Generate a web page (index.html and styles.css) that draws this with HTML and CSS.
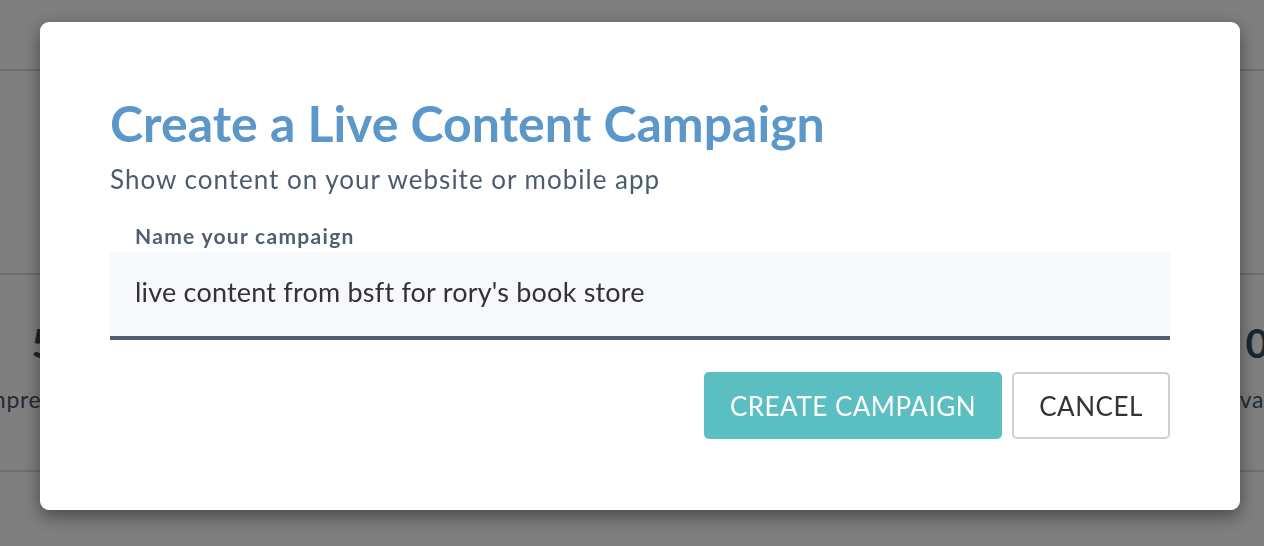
FILE: index.html
```html
<!DOCTYPE html>
<html>
<head>
<meta charset="utf-8">
<link rel="stylesheet" href="styles.css">
</head>
<body>
<div class="page">
  <header class="topbar"></header>
  <div class="spacer"></div>
  <section class="stats">
    <div class="stat stat-left">
      <div class="stat-num">5</div>
      <div class="stat-label">Impressions</div>
    </div>
    <div class="stat stat-mid">
      <div class="stat-num">1</div>
      <div class="stat-label">Clicks</div>
    </div>
    <div class="stat stat-right">
      <div class="stat-num">0</div>
      <div class="stat-label">Activations</div>
    </div>
  </section>
</div>

<div class="overlay">
  <div class="modal">
    <h1 class="modal-title">Create a Live Content Campaign</h1>
    <p class="modal-sub">Show content on your website or mobile app</p>
    <label class="field-label" for="cname">Name your campaign</label>
    <div class="field">
      <input id="cname" class="field-input" type="text" value="live content from bsft for rory's book store">
    </div>
    <div class="actions">
      <button class="btn btn-primary">CREATE CAMPAIGN</button>
      <button class="btn btn-secondary">CANCEL</button>
    </div>
  </div>
</div>
</body>
</html>
```

FILE: styles.css
```css
* { box-sizing: border-box; }
html, body { margin: 0; padding: 0; }
body {
  width: 1264px;
  height: 546px;
  overflow: hidden;
  background: #ffffff;
  font-family: Lato, "Open Sans", Arial, sans-serif;
}
.page { width: 1264px; }
.topbar { height: 71px; border-bottom: 2px solid #dcdcdc; }
.spacer { height: 202px; }
.stats {
  height: 199px;
  border-top: 2px solid #dcdcdc;
  border-bottom: 2px solid #dcdcdc;
  display: flex;
  justify-content: space-between;
  padding-top: 44px;
}
.stat {
  display: flex;
  flex-direction: column;
  align-items: center;
  color: #3a4a5c;
  white-space: nowrap;
}
.stat-left { width: 86px; }
.stat-mid { width: 120px; }
.stat-right { width: 14px; }
.stat-num { font-size: 40px; font-weight: 700; line-height: 48px; }
.stat-label {
  font-size: 23px;
  line-height: 30px;
  margin-top: 17px;
  letter-spacing: 0.6px;
  color: #46566a;
}

.overlay {
  position: fixed;
  inset: 0;
  background: rgba(0,0,0,0.5);
}
.modal {
  margin: 22px 0 0 40px;
  width: 1200px;
  height: 488px;
  background: #fff;
  border-radius: 9px;
  box-shadow: 0 6px 18px rgba(0,0,0,0.45);
  padding: 71px 70px 0 70px;
}
.modal-title {
  margin: 0;
  font-size: 50px;
  line-height: 60px;
  font-weight: 700;
  color: #5b97c9;
}
.modal-sub {
  margin: 10px 0 0 0;
  font-size: 26px;
  line-height: 32px;
  letter-spacing: 1px;
  color: #4c5b6e;
}
.field-label {
  display: block;
  margin: 28px 0 0 25px;
  font-size: 21px;
  line-height: 26px;
  font-weight: 700;
  letter-spacing: 1.3px;
  color: #4f5e72;
}
.field {
  margin-top: 3px;
  height: 88px;
  background: #f6f8fc;
  border-bottom: 4px solid #4f5e6f;
}
.field-input {
  display: block;
  width: 100%;
  height: 84px;
  border: 0;
  background: transparent;
  padding: 0 25px 5px 25px;
  font-family: Lato, "Open Sans", Arial, sans-serif;
  font-size: 27px;
  letter-spacing: 0.2px;
  color: #333;
  outline: none;
}
.actions {
  display: flex;
  justify-content: flex-end;
  gap: 10px;
  margin-top: 32px;
}
.btn {
  height: 67px;
  border-radius: 5px;
  font-family: Lato, "Open Sans", Arial, sans-serif;
  font-size: 26px;
  letter-spacing: 0.5px;
  padding: 0;
  cursor: pointer;
}
.btn-primary {
  width: 298px;
  background: #5bbec1;
  border: 0;
  color: #fff;
}
.btn-secondary {
  width: 158px;
  background: #fff;
  border: 2px solid #cfcfcf;
  color: #333;
}
```
